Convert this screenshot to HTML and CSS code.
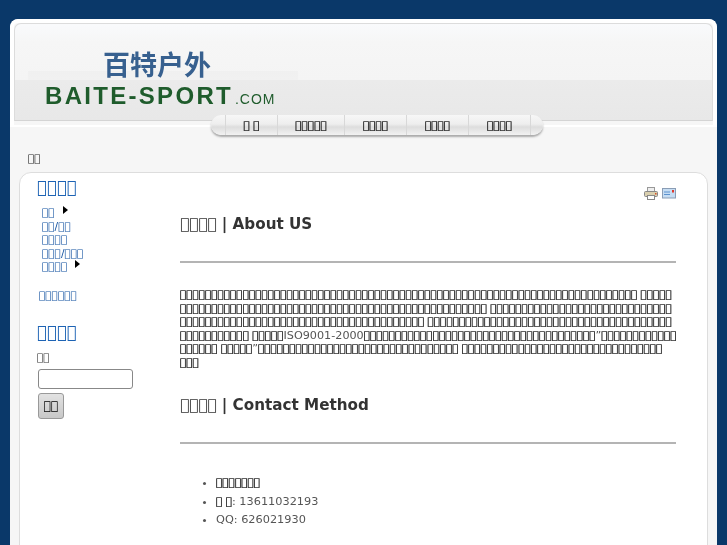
FILE: index.html
```html
<!DOCTYPE html>
<html lang="en">
<head>
  <meta charset="UTF-8" />
  <title>百特户外</title>
  <link rel="stylesheet" href="styles.css">
</head>
<body>
  <div class="page">
    <div class="top">
      <div class="banner">
        <div class="logo">
          <div class="logo-cn">百特户外</div>
          <div class="logo-en">BAITE-SPORT<span class="logo-com">.COM</span></div>
        </div>
      </div>
    </div>
    <ul class="nav">
      <li><a>&#xE000; &#xE000;</a></li>
      <li><a>&#xE000;&#xE000;&#xE000;&#xE000;&#xE000;</a></li>
      <li><a>&#xE000;&#xE000;&#xE000;&#xE000;</a></li>
      <li><a>&#xE000;&#xE000;&#xE000;&#xE000;</a></li>
      <li><a>&#xE000;&#xE000;&#xE000;&#xE000;</a></li>
    </ul>
    <div class="crumb">&#xE000;&#xE000;</div>
    <div class="main">
      <div class="side">
        <h3>&#xE000;&#xE000;&#xE000;&#xE000;</h3>
        <ul class="side-menu">
          <li><a>&#xE000;&#xE000;</a><span class="arrow"></span></li>
          <li><a>&#xE000;&#xE000;/&#xE000;&#xE000;</a></li>
          <li><a>&#xE000;&#xE000;&#xE000;&#xE000;</a></li>
          <li><a>&#xE000;&#xE000;&#xE000;/&#xE000;&#xE000;&#xE000;</a></li>
          <li><a>&#xE000;&#xE000;&#xE000;&#xE000;</a><span class="arrow"></span></li>
        </ul>
        <a class="side-link">&#xE000;&#xE000;&#xE000;&#xE000;&#xE000;&#xE000;</a>
        <h3>&#xE000;&#xE000;&#xE000;&#xE000;</h3>
        <label class="search-label">&#xE000;&#xE000;</label>
        <input class="search-input" type="text" />
        <button class="search-btn">&#xE000;&#xE000;</button>
      </div>
      <div class="content">
        <div class="tools">
          <svg width="14" height="14" viewBox="0 0 14 14">
            <rect x="3.5" y="1.5" width="7" height="4" fill="#eee" stroke="#999"/>
            <rect x="0.5" y="5.5" width="13" height="5" rx="1" fill="#d9cfae" stroke="#888"/>
            <rect x="3.5" y="9.5" width="7" height="4" fill="#fff" stroke="#888"/>
            <rect x="11" y="7" width="1.5" height="1.5" fill="#d8502a"/>
          </svg>
          <svg width="14" height="11" viewBox="0 0 14 11">
            <rect x="0.5" y="0.5" width="13" height="9.5" fill="#c6ddf3" stroke="#8a9db5"/>
            <path d="M2 4h6M2 6.500h6" stroke="#5c92cf"/>
            <rect x="10" y="2" width="2" height="2.500" fill="#e0392b"/>
          </svg>
        </div>
        <h2>&#xE000;&#xE000;&#xE000;&#xE000; | About US</h2>
        <hr />
        <p class="text">
          &#xE000;&#xE000;&#xE000;&#xE000;&#xE000;&#xE000;&#xE000;&#xE000;&#xE000;&#xE000;&#xE000;&#xE000;&#xE000;&#xE000;&#xE000;&#xE000;&#xE000;&#xE000;&#xE000;&#xE000;&#xE000;&#xE000;&#xE000;&#xE000;&#xE000;&#xE000;&#xE000;&#xE000;&#xE000;&#xE000;&#xE000;&#xE000;&#xE000;&#xE000;&#xE000;&#xE000;&#xE000;&#xE000;&#xE000;&#xE000;&#xE000;&#xE000;&#xE000;&#xE000;&#xE000;&#xE000;&#xE000;&#xE000;&#xE000;&#xE000;&#xE000;&#xE000;&#xE000;&#xE000;&#xE000;&#xE000;&#xE000;&#xE000;&#xE000;&#xE000;&#xE000;&#xE000;&#xE000;&#xE000;&#xE000;&#xE000;&#xE000;&#xE000;&#xE000;&#xE000;&#xE000;&#xE000;&#xE000; &#xE000;&#xE000;&#xE000;&#xE000;&#xE000;<br>
          &#xE000;&#xE000;&#xE000;&#xE000;&#xE000;&#xE000;&#xE000;&#xE000;&#xE000;&#xE000;&#xE000;&#xE000;&#xE000;&#xE000;&#xE000;&#xE000;&#xE000;&#xE000;&#xE000;&#xE000;&#xE000;&#xE000;&#xE000;&#xE000;&#xE000;&#xE000;&#xE000;&#xE000;&#xE000;&#xE000;&#xE000;&#xE000;&#xE000;&#xE000;&#xE000;&#xE000;&#xE000;&#xE000;&#xE000;&#xE000;&#xE000;&#xE000;&#xE000;&#xE000;&#xE000;&#xE000;&#xE000;&#xE000;&#xE000; &#xE000;&#xE000;&#xE000;&#xE000;&#xE000;&#xE000;&#xE000;&#xE000;&#xE000;&#xE000;&#xE000;&#xE000;&#xE000;&#xE000;&#xE000;&#xE000;&#xE000;&#xE000;&#xE000;&#xE000;&#xE000;&#xE000;&#xE000;&#xE000;&#xE000;&#xE000;&#xE000;&#xE000;&#xE000;<br>
          &#xE000;&#xE000;&#xE000;&#xE000;&#xE000;&#xE000;&#xE000;&#xE000;&#xE000;&#xE000;&#xE000;&#xE000;&#xE000;&#xE000;&#xE000;&#xE000;&#xE000;&#xE000;&#xE000;&#xE000;&#xE000;&#xE000;&#xE000;&#xE000;&#xE000;&#xE000;&#xE000;&#xE000;&#xE000;&#xE000;&#xE000;&#xE000;&#xE000;&#xE000;&#xE000;&#xE000;&#xE000;&#xE000;&#xE000; &#xE000;&#xE000;&#xE000;&#xE000;&#xE000;&#xE000;&#xE000;&#xE000;&#xE000;&#xE000;&#xE000;&#xE000;&#xE000;&#xE000;&#xE000;&#xE000;&#xE000;&#xE000;&#xE000;&#xE000;&#xE000;&#xE000;&#xE000;&#xE000;&#xE000;&#xE000;&#xE000;&#xE000;&#xE000;&#xE000;&#xE000;&#xE000;&#xE000;&#xE000;&#xE000;&#xE000;&#xE000;&#xE000;&#xE000;<br>
          &#xE000;&#xE000;&#xE000;&#xE000;&#xE000;&#xE000;&#xE000;&#xE000;&#xE000;&#xE000;&#xE000; &#xE000;&#xE000;&#xE000;&#xE000;&#xE000;<span class="iso">ISO9001-2000</span>&#xE000;&#xE000;&#xE000;&#xE000;&#xE000;&#xE000;&#xE000;&#xE000;&#xE000;&#xE000;&#xE000;&#xE000;&#xE000;&#xE000;&#xE000;&#xE000;&#xE000;&#xE000;&#xE000;&#xE000;&#xE000;&#xE000;&#xE000;&#xE000;&#xE000;&#xE000;&#xE000;&#xE000;&#xE000;&#xE000;&#xE000;&#xE000;&#xE000;&#xE000;&#xE000;&#xE000;&#xE000;<span class="iso">”</span>&#xE000;&#xE000;&#xE000;&#xE000;&#xE000;&#xE000;&#xE000;&#xE000;&#xE000;&#xE000;&#xE000;&#xE000;<br>
          &#xE000;&#xE000;&#xE000;&#xE000;&#xE000;&#xE000; &#xE000;&#xE000;&#xE000;&#xE000;&#xE000;<span class="iso">”</span>&#xE000;&#xE000;&#xE000;&#xE000;&#xE000;&#xE000;&#xE000;&#xE000;&#xE000;&#xE000;&#xE000;&#xE000;&#xE000;&#xE000;&#xE000;&#xE000;&#xE000;&#xE000;&#xE000;&#xE000;&#xE000;&#xE000;&#xE000;&#xE000;&#xE000;&#xE000;&#xE000;&#xE000;&#xE000;&#xE000;&#xE000;&#xE000; &#xE000;&#xE000;&#xE000;&#xE000;&#xE000;&#xE000;&#xE000;&#xE000;&#xE000;&#xE000;&#xE000;&#xE000;&#xE000;&#xE000;&#xE000;&#xE000;&#xE000;&#xE000;&#xE000;&#xE000;&#xE000;&#xE000;&#xE000;&#xE000;&#xE000;&#xE000;&#xE000;&#xE000;&#xE000;&#xE000;&#xE000;&#xE000;<br>
          &#xE000;&#xE000;&#xE000;
        </p>
        <h2>&#xE000;&#xE000;&#xE000;&#xE000; | Contact Method</h2>
        <hr />
        <ul class="contact">
          <li><b>&#xE000;&#xE000;&#xE000;&#xE000;&#xE000;&#xE000;&#xE000;</b></li>
          <li><b>&#xE000; &#xE000;</b>: 13611032193</li>
          <li>QQ: 626021930</li>
        </ul>
      </div>
    </div>
  </div>
</body>
</html>
```

FILE: styles.css
```css
html, body {
  height: 545px;
  overflow: hidden;
}

body {
  margin: 0;
  background: #0a3869;
  font-family: "DejaVu Sans", sans-serif;
  font-size: 11.3px;
  color: #555;
}

.page {
  margin: 19px 10px 0;
  height: 526px;
  overflow: hidden;
  background: #f6f6f6;
  border-radius: 8px 8px 0 0;
  filter: blur(0.25px);
}

.top {
  background: #f6f6f6;
  border-radius: 8px 8px 0 0;
  border: solid #fff;
  border-width: 4px 4px 0;
  box-shadow: 0 2px 0 #fff;
  padding-bottom: 4px;
}

.banner {
  height: 96px;
  border: 1px solid #dcdcdc;
  border-bottom-color: #d4d4d4;
  border-radius: 7px 7px 0 0;
  background: linear-gradient(#f9fafc 0, #f6f6f6 18px, #f4f4f4 56px, #ebebeb 56px, #e8e8e8 100%);
}

.logo {
  width: 270px;
  height: 96px;
  box-sizing: border-box;
  margin-left: 13px;
  padding: 25px 0 0 17px;
  background: linear-gradient(transparent 47px, #f0f0f0 47px, #f1f1f1 56px, transparent 56px);
}

.logo-cn {
  padding-left: 58px;
  font-family: "Noto Sans CJK SC", sans-serif;
  font-weight: 700;
  font-size: 27px;
  line-height: 30px;
  color: #37608f;
}

.logo-en {
  margin-top: 6px;
  font-family: "Liberation Sans", sans-serif;
  font-weight: 700;
  font-size: 24px;
  line-height: 22px;
  letter-spacing: 2.3px;
  white-space: nowrap;
  color: #1f5c2c;
}

.logo-com {
  margin-left: 2px;
  font-size: 14px;
  font-weight: 400;
  letter-spacing: 1px;
}

.nav {
  display: flex;
  width: fit-content;
  margin: -10px 0 0 201px;
  padding: 0 12px 0 14px;
  list-style: none;
  height: 20px;
  border-radius: 10px;
  background: linear-gradient(#f7f7f7, #eeeeee 45%, #dddddd 60%, #f2f2f2);
  box-shadow: 0 2px 2px #aaa;
  position: relative;
}

.nav li {
  display: flex;
  align-items: center;
  justify-content: center;
  border-left: 1px solid #d8d8d8;
  font-size: 10.5px;
  color: #000;
  -webkit-text-stroke: 0.2px #000;
  width: 61px;
}

.nav li:first-child {
  width: 51px;
}

.nav li:nth-child(2) {
  width: 66px;
}

.nav li:last-child {
  border-right: 1px solid #d8d8d8;
}

.crumb {
  padding: 17px 0 0 18px;
  height: 20px;
  color: #222;
  font-size: 10.5px;
}

.main {
  display: flex;
  margin: 0 9px;
  height: 400px;
  background: #fff;
  border: 1px solid #ddd;
  border-radius: 12px;
}

.side {
  width: 160px;
  padding-left: 17px;
  box-sizing: border-box;
  flex: none;
  color: #333;
}

.side h3 {
  margin: 5px 0 0;
  font-size: 16.6px;
  font-weight: normal;
  line-height: 20px;
  color: #1d63b4;
}

.side-menu {
  margin: 8px 0 0;
  padding: 0 0 0 5px;
  list-style: none;
  font-size: 10.5px;
  line-height: 13.6px;
  color: #0f4f9f;
}

.arrow {
  display: inline-block;
  margin-left: 8px;
  vertical-align: 2px;
  border-left: 5px solid #000;
  border-top: 4px solid transparent;
  border-bottom: 4px solid transparent;
}

.side-link {
  display: block;
  margin: 15px 0 0 2px;
  font-size: 10.5px;
  line-height: 13.6px;
  color: #0f4f9f;
}

.side-link + h3 {
  margin-top: 20px;
}

.search-label {
  display: block;
  margin-top: 8px;
  font-size: 10.5px;
  color: #333;
}

.search-input {
  display: block;
  box-sizing: border-box;
  width: 95px;
  height: 20px;
  margin: 6px 0 0 1px;
  border: 1px solid #888;
  border-radius: 3px;
  background: #fff;
}

.search-btn {
  display: block;
  width: 26px;
  height: 26px;
  margin: 4px 0 0 1px;
  padding: 0;
  border: 1px solid #999;
  border-radius: 3px;
  background: linear-gradient(#e2e2e2, #c8c8c8);
  font-family: inherit;
  font-size: 12px;
  color: #000;
}

.content {
  flex: none;
  width: 496px;
}

.tools {
  display: flex;
  justify-content: flex-end;
  align-items: center;
  gap: 4px;
  margin-top: 13px;
}

.content h2 {
  margin: 14px 0 0;
  font-size: 15.2px;
  line-height: 20px;
  color: #333;
}

.content hr {
  margin: 27px 0 0;
  border: 0;
  border-top: 2px solid #b4b4b4;
}

.text {
  margin: 25px 0 0;
  font-size: 10.45px;
  line-height: 13.6px;
  color: #000;
  -webkit-text-stroke: 0.2px #000;
  white-space: nowrap;
}

.iso {
  font-size: 11.2px;
  color: #555;
  -webkit-text-stroke: 0;
}

.text + h2 {
  margin-top: 25px;
}

.contact {
  margin: 29px 0 0;
  padding-left: 36px;
  line-height: 18px;
}

.contact b {
  font-weight: normal;
  font-size: 10.5px;
  color: #000;
  -webkit-text-stroke: 0.2px #000;
}
```
